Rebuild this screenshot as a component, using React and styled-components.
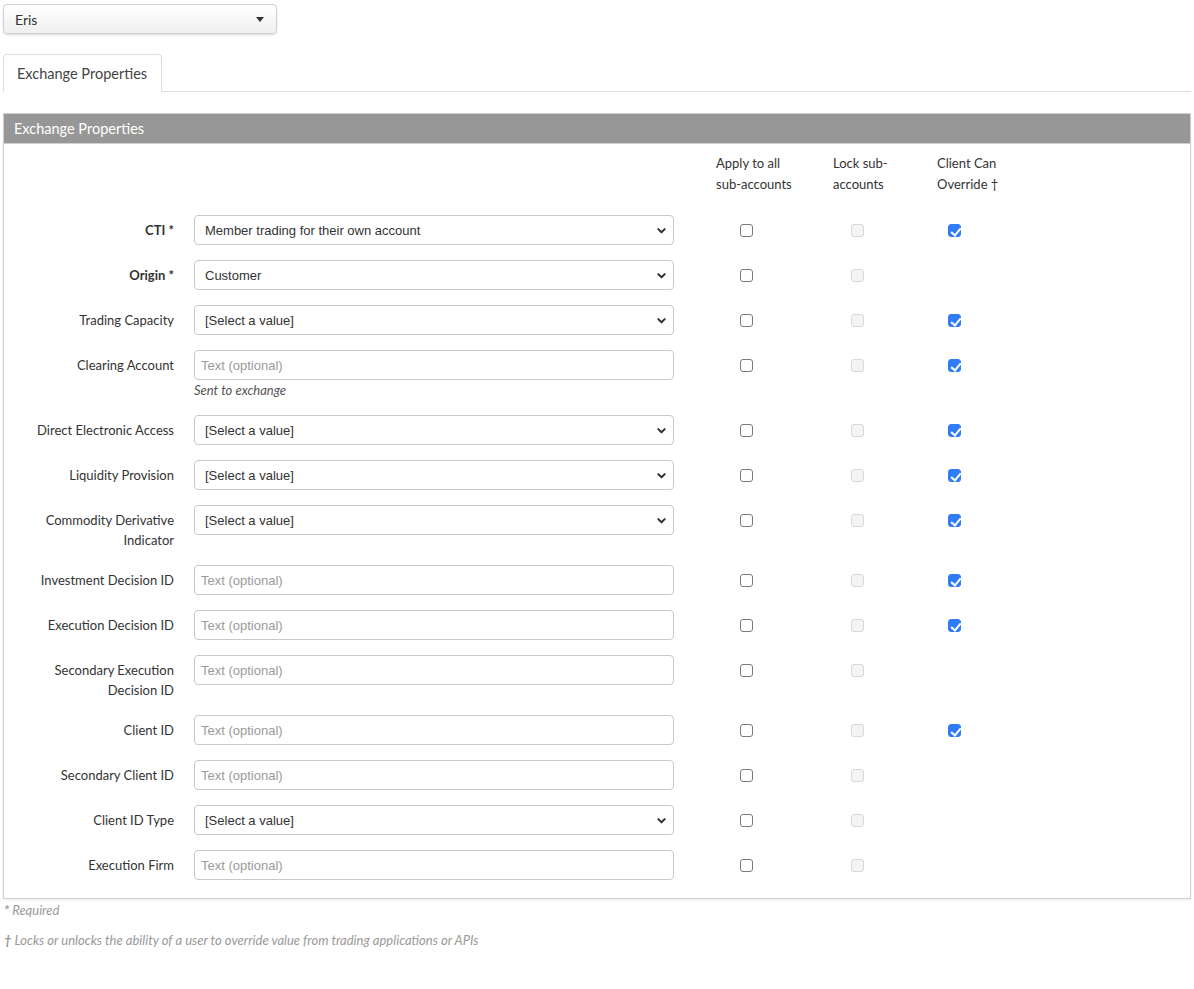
import styled, { createGlobalStyle } from "styled-components"

const GlobalStyle = createGlobalStyle`
* { box-sizing: border-box; }
body {
  margin: 0;
  background: #fff;
  font-family: Lato, "Open Sans", sans-serif;
  color: #333;
}
`

const Page = styled.div`
padding: 4px 3px 20px 3px;
`
const Picker = styled.div`
width: 274px;
height: 30px;
display: flex;
align-items: center;
justify-content: space-between;
padding: 0 12px 0 11px;
border: 1px solid #d2d2d2;
border-radius: 4px;
background: linear-gradient(#ffffff, #efefef);
box-shadow: 0 1px 2px rgba(0, 0, 0, 0.15);
font-size: 14px;
color: #333;
`
const Caret = styled.span`
width: 0;
height: 0;
border-left: 4px solid transparent;
border-right: 4px solid transparent;
border-top: 5px solid #333;
`
const Tabs = styled.div`
display: flex;
margin-top: 20px;
border-bottom: 1px solid #ddd;
`
const Tab = styled.div`
height: 38px;
margin-bottom: -1px;
padding: 0 14px 0 13px;
display: flex;
align-items: center;
border: 1px solid #ddd;
border-bottom-color: #fff;
border-radius: 4px 4px 0 0;
background: #fff;
font-size: 14.5px;
color: #444;
`
const Panel = styled.div`
margin-top: 21px;
border: 1px solid #cfcfcf;
box-shadow: 0 1px 2px rgba(0, 0, 0, 0.08);
`
const PanelHeading = styled.div`
height: 30px;
display: flex;
align-items: center;
padding-left: 10px;
background: #979797;
border-bottom: 1px solid #cfcfcf;
color: #fff;
font-size: 14.5px;
`
const PanelBody = styled.div`
padding: 9px 0 3px 0;
`
const Row = styled.div`
display: flex;
align-items: flex-start;
margin-bottom: ${(p) => (p.$head ? "20px" : "15px")};
`
const Label = styled.div`
width: 170px;
padding: 5px 0 0 15px;
text-align: right;
font-size: 13px;
line-height: 20px;
font-weight: ${(p) => (p.$required ? 700 : 400)};
color: #333;
`
const Control = styled.div`
width: 480px;
margin-left: 20px;
`
const fieldBase = `
width: 100%;
height: 30px;
border: 1px solid #c9c9c9;
border-radius: 4px;
background: #fff;
font-family: "Liberation Sans", Arial, sans-serif;
font-size: 13px;
color: #333;
display: flex;
align-items: center;
`
const Select = styled.div`
${fieldBase}
justify-content: space-between;
padding: 0 6px 0 10px;
`
const Input = styled.input`
${fieldBase}
padding: 0 6px;
outline: none;
&::placeholder { color: #9a9a9a; }
`
const Help = styled.div`
font-size: 13px;
font-style: italic;
line-height: 20px;
color: #555;
`
const Cell = styled.div`
width: ${(p) => p.$w}px;
margin-left: ${(p) => p.$ml || 0}px;
height: 30px;
display: flex;
align-items: center;
padding-left: ${(p) => p.$pad}px;
padding-top: 1px;
`
const HeadCell = styled.div`
width: ${(p) => p.$w}px;
margin-left: ${(p) => p.$ml || 0}px;
font-size: 13px;
line-height: 21px;
color: #333;
`
const Box = styled.span`
position: relative;
display: inline-block;
width: 13px;
height: 13px;
border-radius: 3px;
border: 1px solid ${(p) => (p.$checked ? "#2f7cf6" : p.$disabled ? "#d8d8d8" : "#7a7a7a")};
background: ${(p) => (p.$checked ? "#2f7cf6" : p.$disabled ? "#f4f4f4" : "#fff")};
&::after {
  content: "";
  display: ${(p) => (p.$checked ? "block" : "none")};
  position: absolute;
  left: 3.5px;
  top: 0.5px;
  width: 4px;
  height: 8px;
  border-right: 2px solid #fff;
  border-bottom: 2px solid #fff;
  transform: rotate(40deg);
}
`
const Notes = styled.div`
padding-left: 1px;
font-size: 13px;
font-style: italic;
color: #999;
line-height: 18px;
`
const Note = styled.div`
margin-top: ${(p) => p.$mt}px;
& b { font-weight: 700; }
`

const Chevron = () => (
  <svg width="11" height="11" viewBox="0 0 12 12">
    <path d="M2.5 4.5 L6 8 L9.5 4.5" fill="none" stroke="#333" strokeWidth="2.2" strokeLinecap="round" strokeLinejoin="round" />
  </svg>
)

const rows = [
  { label: "CTI *", required: true, type: "select", value: "Member trading for their own account", client: true },
  { label: "Origin *", required: true, type: "select", value: "Customer", client: false },
  { label: "Trading Capacity", type: "select", value: "[Select a value]", client: true },
  { label: "Clearing Account", type: "text", help: "Sent to exchange", client: true },
  { label: "Direct Electronic Access", type: "select", value: "[Select a value]", client: true },
  { label: "Liquidity Provision", type: "select", value: "[Select a value]", client: true },
  { label: "Commodity Derivative Indicator", type: "select", value: "[Select a value]", client: true },
  { label: "Investment Decision ID", type: "text", client: true },
  { label: "Execution Decision ID", type: "text", client: true },
  { label: "Secondary Execution Decision ID", type: "text", client: false },
  { label: "Client ID", type: "text", client: true },
  { label: "Secondary Client ID", type: "text", client: false },
  { label: "Client ID Type", type: "select", value: "[Select a value]", client: false },
  { label: "Execution Firm", type: "text", client: false },
]

const App = () => {
  return (
    <Page>
      <GlobalStyle />
      <Picker>
        <span>Eris</span>
        <Caret />
      </Picker>
      <Tabs>
        <Tab>Exchange Properties</Tab>
      </Tabs>
      <Panel>
        <PanelHeading>Exchange Properties</PanelHeading>
        <PanelBody>
          <Row $head>
            <Label />
            <Control />
            <HeadCell $w={117} $ml={42}>Apply to all<br />sub-accounts</HeadCell>
            <HeadCell $w={104}>Lock sub-<br />accounts</HeadCell>
            <HeadCell $w={90}>Client Can<br />Override †</HeadCell>
          </Row>
          {rows.map((r) => (
            <Row key={r.label}>
              <Label $required={r.required}>{r.label}</Label>
              <Control>
                {r.type === "select" ? (
                  <Select>
                    <span>{r.value}</span>
                    <Chevron />
                  </Select>
                ) : (
                  <Input placeholder="Text (optional)" />
                )}
                {r.help && <Help>{r.help}</Help>}
              </Control>
              <Cell $w={117} $ml={42} $pad={24}><Box /></Cell>
              <Cell $w={104} $pad={18}><Box $disabled /></Cell>
              <Cell $w={90} $pad={11}>{r.client && <Box $checked />}</Cell>
            </Row>
          ))}
        </PanelBody>
      </Panel>
      <Notes>
        <Note $mt={2}><b>*</b> Required</Note>
        <Note $mt={12}><b>†</b> Locks or unlocks the ability of a user to override value from trading applications or APIs</Note>
      </Notes>
    </Page>
  )
}

export default App
